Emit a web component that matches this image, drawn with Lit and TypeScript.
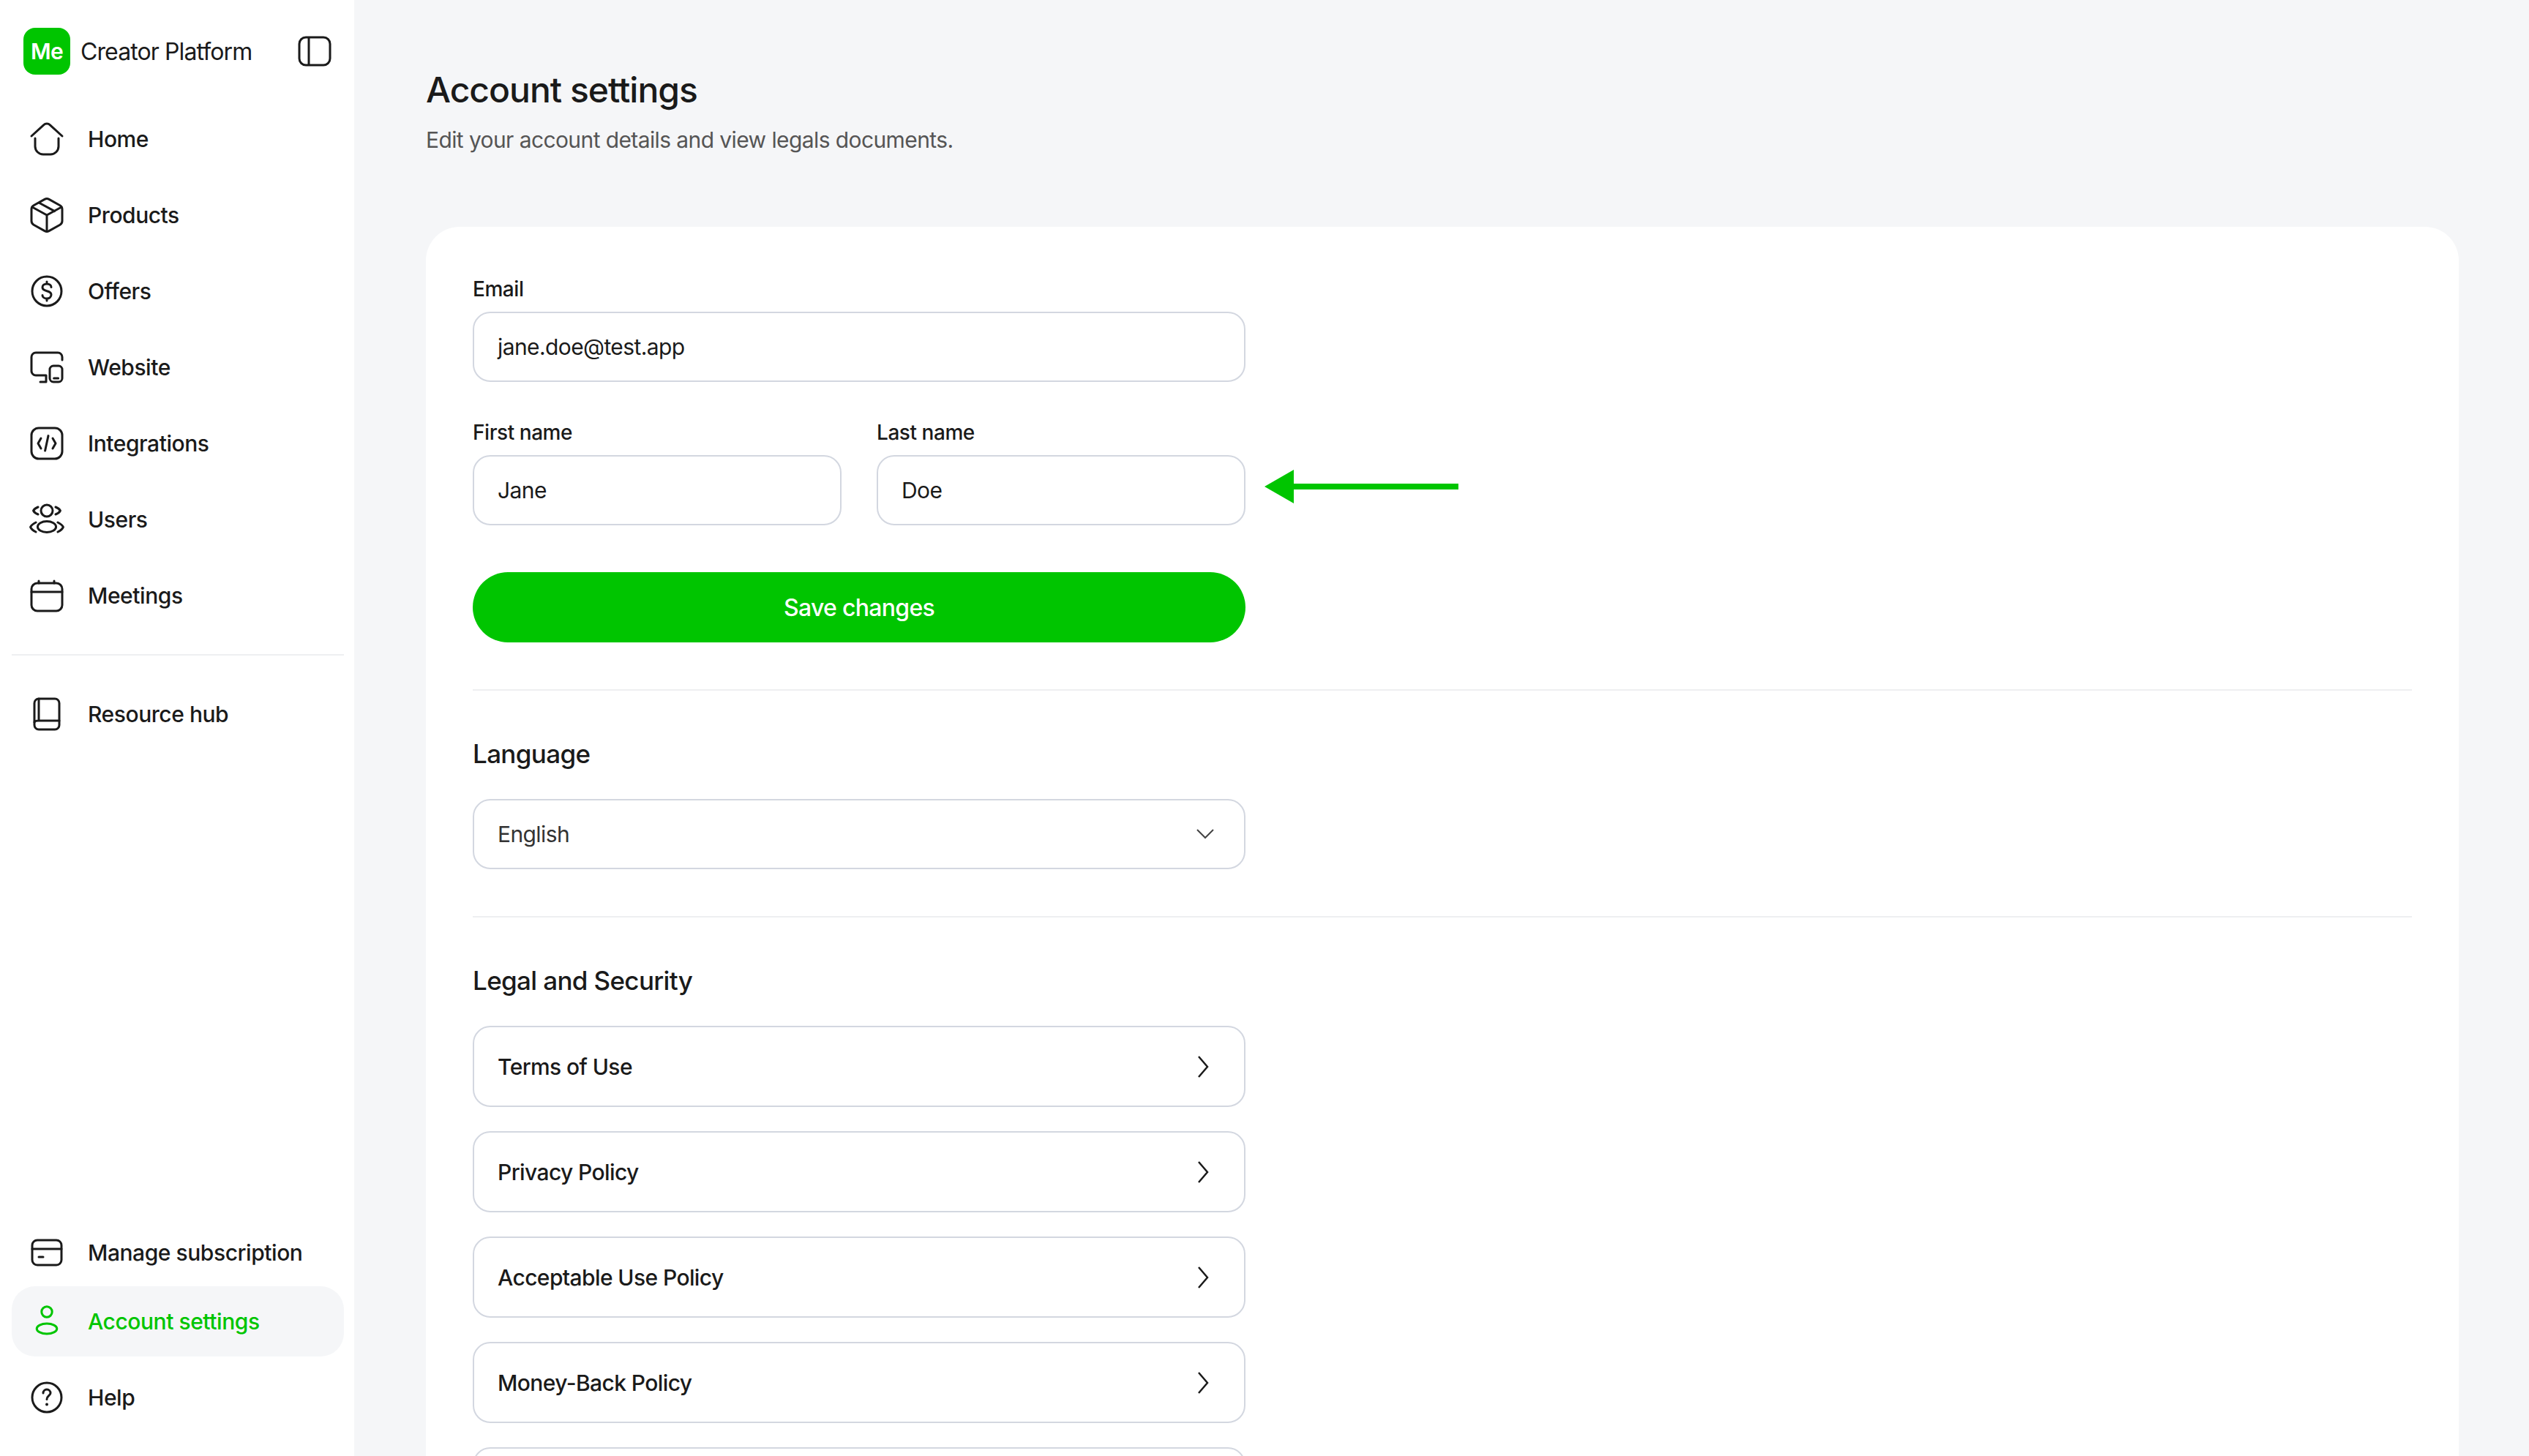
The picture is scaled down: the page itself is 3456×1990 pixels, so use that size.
import { css, html, svg, LitElement } from "lit";

const icons: Record<string, unknown> = {
  home: svg`<path d="M1.5 10 9.8 2.4a3.2 3.2 0 0 1 4.4 0L22.5 10"/><path d="M4 11.5V17a5.5 5.5 0 0 0 5.5 5.5h5A5.5 5.5 0 0 0 20 17v-5.5"/>`,
  box: svg`<path d="M10.5 1.2a3 3 0 0 1 3 0l7.5 4.2a3 3 0 0 1 1.5 2.6v8a3 3 0 0 1-1.5 2.6l-7.5 4.2a3 3 0 0 1-3 0L3 18.6a3 3 0 0 1-1.5-2.6V8A3 3 0 0 1 3 5.4z"/><path d="M2 6.5 12 12l10-5.500M12 12v11.200M6.800 3.600l10.500 5.700"/>`,
  dollar: svg`<circle cx="12" cy="12" r="10"/><path d="M15 9.200c0-1.300-1.300-2.200-3-2.200s-3 .9-3 2.400c0 3.400 6 1.600 6 5 0 1.500-1.300 2.600-3 2.600s-3-1-3-2.300M12 5.500V7M12 17v1.500"/>`,
  devices: svg`<path d="M22.500 7V5a3 3 0 0 0-3-3h-15a3 3 0 0 0-3 3v9.500a3 3 0 0 0 3 3h7V22h-4"/><rect x="14" y="11" width="8.500" height="11" rx="2.500"/><path d="M16.800 19.500h3"/>`,
  code: svg`<rect x="1.500" y="1.500" width="21" height="21" rx="5"/><path d="M8 8.500 6 12l2 3.500M16 8.500l2 3.500-2 3.500M13 6.800 10.800 17"/>`,
  users: svg`<circle cx="12" cy="6" r="4"/><ellipse cx="12" cy="17" rx="6.300" ry="3.700"/><path d="M6 3.500Q3.500 4.500 2.800 6 3.500 7.500 6 8.500M18 3.500Q20.500 4.500 21.200 6 20.500 7.500 18 8.500M4.500 14Q1.500 15.500.8 17.200 1.500 19 4.500 20.500M19.500 14q3 1.500 3.700 3.200-.7 1.800-3.700 3.300"/>`,
  calendar: svg`<rect x="1.500" y="3.500" width="21" height="19" rx="4"/><path d="M1.500 9.500h21M6.500 2v1.500M17 2v1.500"/>`,
  book: svg`<rect x="3.500" y="1.500" width="17" height="21" rx="3"/><path d="M6.500 1.500V16.500M3.500 17.500Q4 16.500 6 16.500H20.500"/>`,
  card: svg`<rect x="2" y="3.500" width="20" height="17" rx="3.500"/><path d="M2 9.500h20M6.500 15h3"/>`,
  user: svg`<circle cx="12" cy="5.500" r="3.600"/><ellipse cx="12" cy="17" rx="6.900" ry="3.500"/>`,
  help: svg`<circle cx="12" cy="12" r="10"/><path d="M9.500 9a2.500 2.500 0 0 1 5 0c0 1.600-2.500 2-2.500 4.200"/><path d="M12 16.700v.1" stroke-width="2"/>`,
};

class NavItem extends LitElement {
  static styles = css`
    :host {
      display: block;
    }

    .item {
      display: flex;
      align-items: center;
      gap: 32px;
      height: 96px;
      padding-left: 24px;
      border-radius: 32px;
      color: #1a1a1a;
      font: 500 30px Inter, sans-serif;
      letter-spacing: -0.45px;
    }

    :host([compact]) .item {
      height: 92px;
    }

    :host([active]) .item {
      background: #f5f6f8;
      color: #00c500;
    }

    svg {
      width: 48px;
      height: 48px;
      fill: none;
      stroke: currentColor;
      stroke-width: 1.5;
      stroke-linecap: round;
      stroke-linejoin: round;
      flex: none;
    }
  `;

  static properties = {
    icon: { type: String },
    label: { type: String },
  };

  declare icon: string;
  declare label: string;

  render() {
    return html`
      <div class="item">
        <svg viewBox="0 0 24 24">${icons[this.icon]}</svg>
        <span>${this.label}</span>
      </div>
    `;
  }
}

customElements.define("nav-item", NavItem);

const topLinks = [
  ["home", "Home"],
  ["box", "Products"],
  ["dollar", "Offers"],
  ["devices", "Website"],
  ["code", "Integrations"],
  ["users", "Users"],
  ["calendar", "Meetings"],
];

const legalLinks = ["Terms of Use", "Privacy Policy", "Acceptable Use Policy", "Money-Back Policy", ""];

class AppRoot extends LitElement {
  static styles = css`
    :host {
      display: flex;
      height: 100vh;
      overflow: hidden;
      background: #f5f6f8;
      color: #1a1a1a;
      font-family: Inter, sans-serif;
      letter-spacing: -0.6px;
    }

    .sidebar {
      display: flex;
      flex-direction: column;
      flex: none;
      box-sizing: border-box;
      width: 484px;
      padding: 38px 14px 32px 16px;
      background: #fff;
    }

    .brand {
      display: flex;
      align-items: center;
      gap: 14px;
      height: 64px;
      margin: 0 0 40px 16px;
    }

    .logo {
      display: flex;
      align-items: center;
      justify-content: center;
      width: 64px;
      height: 64px;
      border-radius: 16px;
      background: #00c500;
      color: #fff;
      font-size: 30px;
      font-weight: 600;
    }

    .brand-name {
      flex: 1;
      font-size: 32px;
      font-weight: 400;
      letter-spacing: -0.9px;
    }

    .toggle {
      width: 48px;
      height: 48px;
      margin-right: 16px;
      fill: none;
      stroke: #1a1a1a;
      stroke-width: 1.5;
    }

    .nav {
      display: flex;
      flex-direction: column;
      gap: 8px;
    }

    .nav-rule {
      height: 2px;
      margin: 32px 0;
      background: #eeeff1;
    }

    .bottom {
      margin-top: auto;
    }

    .bottom .nav-gap {
      height: 8px;
    }

    .main {
      flex: 1;
      min-width: 0;
      padding: 0 96px 0 98px;
    }

    h1 {
      margin: 94px 0 0;
      font-size: 48px;
      line-height: 58px;
      font-weight: 500;
      letter-spacing: -1px;
    }

    .subtitle {
      margin: 19px 0 0;
      color: #555;
      font-size: 30px;
      line-height: 40px;
    }

    .card {
      position: relative;
      margin-top: 99px;
      padding: 67px 64px;
      border-radius: 46px;
      background: #fff;
    }

    .form {
      width: 1056px;
    }

    .field-label {
      display: block;
      margin-bottom: 13px;
      font-size: 28px;
      line-height: 36px;
      font-weight: 500;
      letter-spacing: -0.45px;
    }

    .name-row {
      display: grid;
      grid-template-columns: 1fr 1fr;
      gap: 48px;
      margin-top: 51px;
    }

    .input {
      display: flex;
      align-items: center;
      box-sizing: border-box;
      height: 96px;
      padding: 0 32px;
      border: 2px solid #d3d7e0;
      border-radius: 24px;
      background: #fff;
      font-size: 30px;
    }

    .save {
      display: block;
      width: 100%;
      height: 96px;
      margin-top: 64px;
      border: none;
      border-radius: 48px;
      background: #00c500;
      color: #fff;
      font: 500 32px Inter, sans-serif;
      letter-spacing: -0.7px;
    }

    .rule {
      height: 2px;
      margin: 64px 0 66px;
      background: #eeeff1;
    }

    h2 {
      margin: 0 0 42px;
      font-size: 35px;
      line-height: 40px;
      font-weight: 500;
      letter-spacing: -0.65px;
    }

    .select {
      justify-content: space-between;
      padding: 0 32px;
      color: #333;
    }

    .select svg {
      width: 24px;
      height: 14px;
      margin-right: 9px;
      fill: none;
      stroke: #444;
      stroke-width: 2;
    }

    .legal-list {
      display: flex;
      flex-direction: column;
      gap: 33px;
    }

    .legal {
      height: 111px;
      padding: 0 32px;
      justify-content: space-between;
      font-weight: 500;
    }

    .legal svg {
      width: 16px;
      height: 30px;
      margin-right: 16px;
      fill: none;
      stroke: #1a1a1a;
      stroke-width: 2.5;
    }

    .arrow {
      position: absolute;
      left: 1146px;
      top: 332px;
      width: 265px;
      height: 46px;
      fill: #00c500;
    }
  `;

  render() {
    return html`
      <aside class="sidebar">
        <div class="brand">
          <div class="logo">Me</div>
          <div class="brand-name">Creator Platform</div>
          <svg class="toggle" viewBox="0 0 24 24">
            <rect x="1.500" y="2.500" width="21" height="19" rx="4.500" />
            <path d="M8 2.500v19" />
          </svg>
        </div>
        <nav class="nav">
          ${topLinks.map(([icon, label]) => html`<nav-item .icon=${icon} .label=${label}></nav-item>`)}
        </nav>
        <div class="nav-rule"></div>
        <nav-item .icon=${"book"} .label=${"Resource hub"}></nav-item>
        <div class="bottom">
          <nav-item compact .icon=${"card"} .label=${"Manage subscription"}></nav-item>
          <nav-item active .icon=${"user"} .label=${"Account settings"}></nav-item>
          <div class="nav-gap"></div>
          <nav-item .icon=${"help"} .label=${"Help"}></nav-item>
        </div>
      </aside>
      <main class="main">
        <h1>Account settings</h1>
        <p class="subtitle">Edit your account details and view legals documents.</p>
        <section class="card">
          <div class="form">
            <label class="field-label">Email</label>
            <div class="input">jane.doe@test.app</div>
            <div class="name-row">
              <div>
                <label class="field-label">First name</label>
                <div class="input">Jane</div>
              </div>
              <div>
                <label class="field-label">Last name</label>
                <div class="input">Doe</div>
              </div>
            </div>
            <button class="save">Save changes</button>
          </div>
          <div class="rule"></div>
          <div class="form">
            <h2>Language</h2>
            <div class="input select">
              <span>English</span>
              <svg viewBox="0 0 24 14"><path d="M1 1l11 11L23 1" /></svg>
            </div>
          </div>
          <div class="rule"></div>
          <div class="form">
            <h2>Legal and Security</h2>
            <div class="legal-list">
              ${legalLinks.map(
                (label) => html`
                  <div class="input legal">
                    <span>${label}</span>
                    <svg viewBox="0 0 16 30"><path d="M2 1l12 14L2 29" /></svg>
                  </div>
                `
              )}
            </div>
          </div>
          <svg class="arrow" viewBox="0 0 265 46">
            <path d="M0 23 40 0v19h225v8H40v19z" />
          </svg>
        </section>
      </main>
    `;
  }
}

customElements.define("app-root", AppRoot);
